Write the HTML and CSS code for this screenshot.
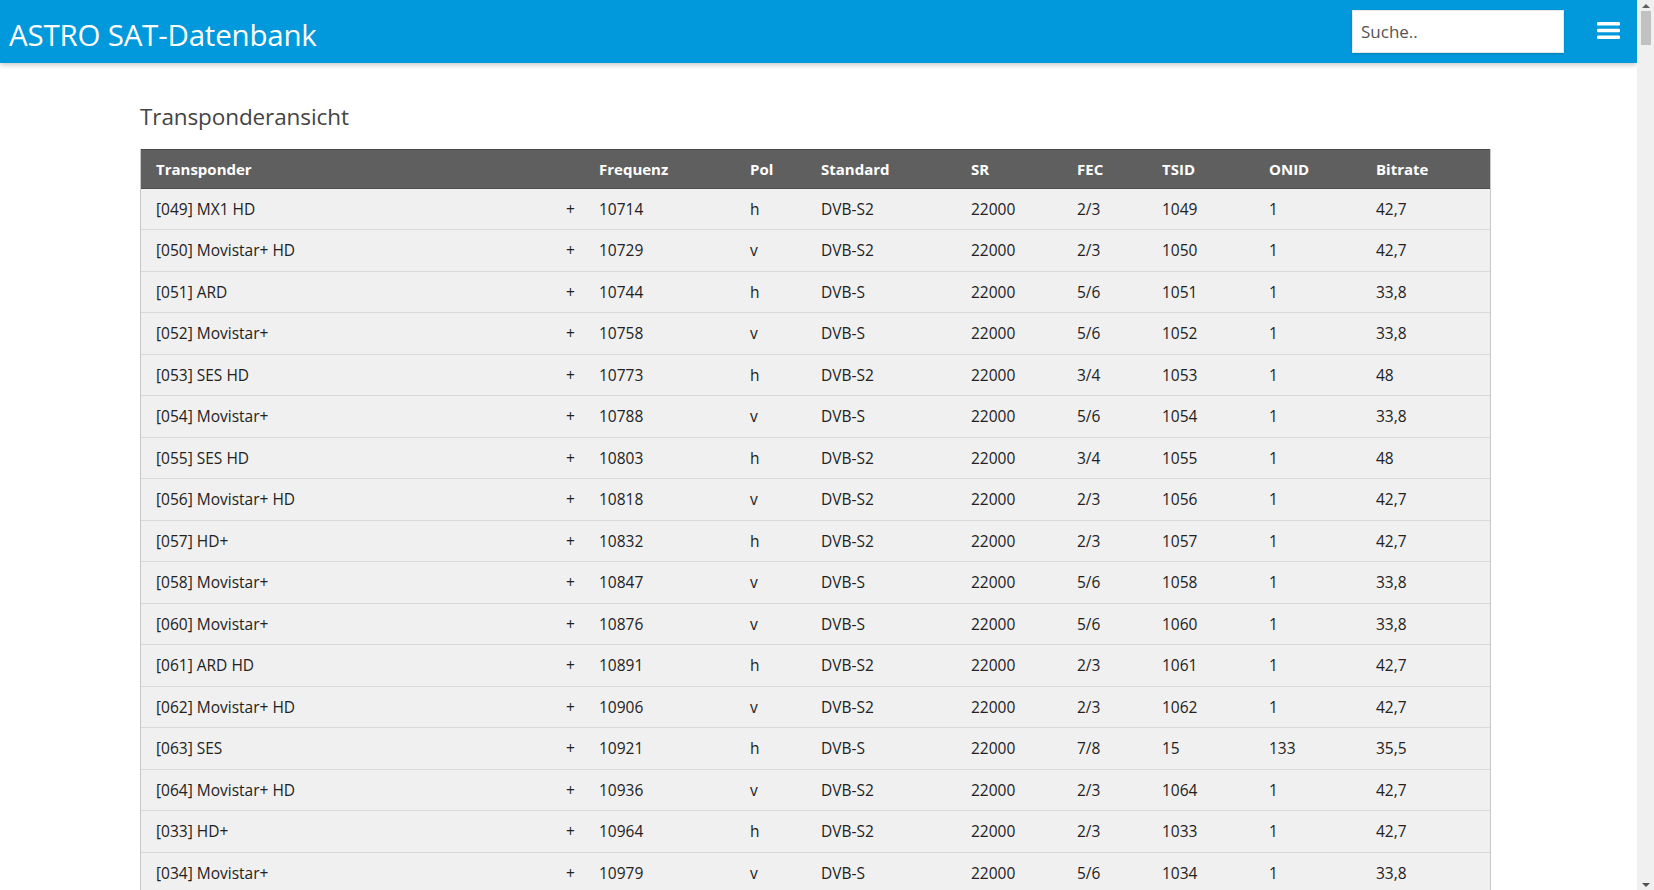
FILE: index.html
```html
<!DOCTYPE html>
<html lang="de">
<head>
<meta charset="utf-8">
<title>ASTRO SAT-Datenbank</title>
<link rel="stylesheet" href="styles.css">
</head>
<body>
<div class="window">
  <div class="page">
    <header class="navbar">
      <div class="brand">ASTRO SAT-Datenbank</div>
      <div class="nav-right">
        <input class="search" type="text" placeholder="Suche..">
        <button class="menu-btn" aria-label="Menü">
          <svg width="23" height="17" viewBox="0 0 23 17"><rect x="0" y="0" width="23" height="3.6" rx="1.2" fill="#fff"/><rect x="0" y="6.7" width="23" height="3.6" rx="1.2" fill="#fff"/><rect x="0" y="13.4" width="23" height="3.6" rx="1.2" fill="#fff"/></svg>
        </button>
      </div>
    </header>
    <main class="content">
      <h1 class="title">Transponderansicht</h1>
      <table class="tp-table">
        <colgroup>
          <col class="c-name"><col class="c-plus"><col class="c-freq"><col class="c-pol"><col class="c-std"><col class="c-sr"><col class="c-fec"><col class="c-tsid"><col class="c-onid"><col class="c-bit">
        </colgroup>
        <thead>
          <tr><th>Transponder</th><th></th><th>Frequenz</th><th>Pol</th><th>Standard</th><th>SR</th><th>FEC</th><th>TSID</th><th>ONID</th><th>Bitrate</th></tr>
        </thead>
        <tbody>
          <tr><td>[049] MX1 HD</td><td>+</td><td>10714</td><td>h</td><td>DVB-S2</td><td>22000</td><td>2/3</td><td>1049</td><td>1</td><td>42,7</td></tr>
          <tr><td>[050] Movistar+ HD</td><td>+</td><td>10729</td><td>v</td><td>DVB-S2</td><td>22000</td><td>2/3</td><td>1050</td><td>1</td><td>42,7</td></tr>
          <tr><td>[051] ARD</td><td>+</td><td>10744</td><td>h</td><td>DVB-S</td><td>22000</td><td>5/6</td><td>1051</td><td>1</td><td>33,8</td></tr>
          <tr><td>[052] Movistar+</td><td>+</td><td>10758</td><td>v</td><td>DVB-S</td><td>22000</td><td>5/6</td><td>1052</td><td>1</td><td>33,8</td></tr>
          <tr><td>[053] SES HD</td><td>+</td><td>10773</td><td>h</td><td>DVB-S2</td><td>22000</td><td>3/4</td><td>1053</td><td>1</td><td>48</td></tr>
          <tr><td>[054] Movistar+</td><td>+</td><td>10788</td><td>v</td><td>DVB-S</td><td>22000</td><td>5/6</td><td>1054</td><td>1</td><td>33,8</td></tr>
          <tr><td>[055] SES HD</td><td>+</td><td>10803</td><td>h</td><td>DVB-S2</td><td>22000</td><td>3/4</td><td>1055</td><td>1</td><td>48</td></tr>
          <tr><td>[056] Movistar+ HD</td><td>+</td><td>10818</td><td>v</td><td>DVB-S2</td><td>22000</td><td>2/3</td><td>1056</td><td>1</td><td>42,7</td></tr>
          <tr><td>[057] HD+</td><td>+</td><td>10832</td><td>h</td><td>DVB-S2</td><td>22000</td><td>2/3</td><td>1057</td><td>1</td><td>42,7</td></tr>
          <tr><td>[058] Movistar+</td><td>+</td><td>10847</td><td>v</td><td>DVB-S</td><td>22000</td><td>5/6</td><td>1058</td><td>1</td><td>33,8</td></tr>
          <tr><td>[060] Movistar+</td><td>+</td><td>10876</td><td>v</td><td>DVB-S</td><td>22000</td><td>5/6</td><td>1060</td><td>1</td><td>33,8</td></tr>
          <tr><td>[061] ARD HD</td><td>+</td><td>10891</td><td>h</td><td>DVB-S2</td><td>22000</td><td>2/3</td><td>1061</td><td>1</td><td>42,7</td></tr>
          <tr><td>[062] Movistar+ HD</td><td>+</td><td>10906</td><td>v</td><td>DVB-S2</td><td>22000</td><td>2/3</td><td>1062</td><td>1</td><td>42,7</td></tr>
          <tr><td>[063] SES</td><td>+</td><td>10921</td><td>h</td><td>DVB-S</td><td>22000</td><td>7/8</td><td>15</td><td>133</td><td>35,5</td></tr>
          <tr><td>[064] Movistar+ HD</td><td>+</td><td>10936</td><td>v</td><td>DVB-S2</td><td>22000</td><td>2/3</td><td>1064</td><td>1</td><td>42,7</td></tr>
          <tr><td>[033] HD+</td><td>+</td><td>10964</td><td>h</td><td>DVB-S2</td><td>22000</td><td>2/3</td><td>1033</td><td>1</td><td>42,7</td></tr>
          <tr><td>[034] Movistar+</td><td>+</td><td>10979</td><td>v</td><td>DVB-S</td><td>22000</td><td>5/6</td><td>1034</td><td>1</td><td>33,8</td></tr>
        </tbody>
      </table>
    </main>
  </div>
  <div class="scrollbar">
    <div class="sb-arrow sb-up"></div>
    <div class="sb-track"><div class="sb-thumb"></div></div>
    <div class="sb-arrow sb-down"></div>
  </div>
</div>
</body>
</html>
```

FILE: styles.css
```css
* { box-sizing: border-box; }

html, body {
  margin: 0;
  padding: 0;
  height: 890px;
  overflow: hidden;
  background: #fff;
  font-family: "Open Sans", "Noto Sans", Arial, sans-serif;
  color: #222;
}

.window {
  display: flex;
  height: 890px;
}

.page {
  flex: 1;
  min-width: 0;
  overflow: hidden;
}

.navbar {
  height: 63px;
  background: #0199db;
  display: flex;
  align-items: center;
  justify-content: space-between;
  box-shadow: 0 2px 5px rgba(0, 0, 0, 0.22);
  position: relative;
  z-index: 1;
}

.brand {
  color: #fff;
  font-size: 29.5px;
  font-weight: 400;
  padding-left: 9px;
  letter-spacing: -0.2px;
  line-height: 1;
  margin-top: 6px;
}

.nav-right {
  display: flex;
  align-items: center;
  padding-right: 17px;
}

.search {
  width: 212px;
  height: 43px;
  border: 1px solid #e6e6e6;
  background: #fff;
  padding: 0 8px;
  font-family: inherit;
  font-size: 17px;
  color: #333;
  outline: none;
  box-shadow: 0 1px 2px rgba(0, 0, 0, 0.15);
  margin-top: -1px;
}

.search::placeholder {
  color: #555;
}

.menu-btn {
  border: 0;
  background: transparent;
  padding: 0;
  margin-left: 33px;
  width: 23px;
  height: 17px;
  display: flex;
  margin-top: -2px;
}

.content {
  padding: 38.5px 0 0 140px;
}

.title {
  margin: 0 0 17px 0;
  font-size: 22.5px;
  font-weight: 400;
  color: #444;
  line-height: 30px;
  letter-spacing: -0.1px;
}

.tp-table {
  table-layout: fixed;
  width: 1351px;
  border-collapse: separate;
  border-spacing: 0;
  border-left: 1px solid #c8c8c8;
  border-right: 1px solid #c8c8c8;
  font-size: 15.5px;
}

.c-name { width: 410px; }
.c-plus { width: 33px; }
.c-freq { width: 151px; }
.c-pol { width: 71px; }
.c-std { width: 150px; }
.c-sr { width: 106px; }
.c-fec { width: 85px; }
.c-tsid { width: 107px; }
.c-onid { width: 107px; }
.c-bit { width: 129px; }

.tp-table th {
  background: #5f5f5f;
  color: #fff;
  font-weight: 700;
  font-size: 15px;
  text-align: left;
  height: 40px;
  padding: 0 0 0 15px;
  border-top: 1px solid #4a4a4a;
  border-bottom: 1px solid #4e4e4e;
  letter-spacing: 0;
  vertical-align: middle;
}

.tp-table td {
  background: #f0f0f0;
  height: 41.5px;
  padding: 0 0 0 15px;
  border-bottom: 1px solid #d9d9d9;
  vertical-align: middle;
  white-space: nowrap;
  overflow: hidden;
  color: #222;
}

.scrollbar {
  width: 17px;
  flex: none;
  background: #f0f0f0;
  display: flex;
  flex-direction: column;
  align-items: center;
}

.sb-arrow {
  width: 17px;
  height: 11px;
  display: flex;
  justify-content: center;
  align-items: center;
  flex: none;
}

.sb-up::before {
  content: "";
  border-left: 4px solid transparent;
  border-right: 4px solid transparent;
  border-bottom: 4px solid #606060;
}

.sb-down::before {
  content: "";
  border-left: 4px solid transparent;
  border-right: 4px solid transparent;
  border-top: 4px solid #505050;
}

.sb-track {
  flex: 1;
  width: 17px;
  display: flex;
  justify-content: center;
}

.sb-thumb {
  width: 10px;
  height: 34px;
  background: #c1c1c1;
}
```
